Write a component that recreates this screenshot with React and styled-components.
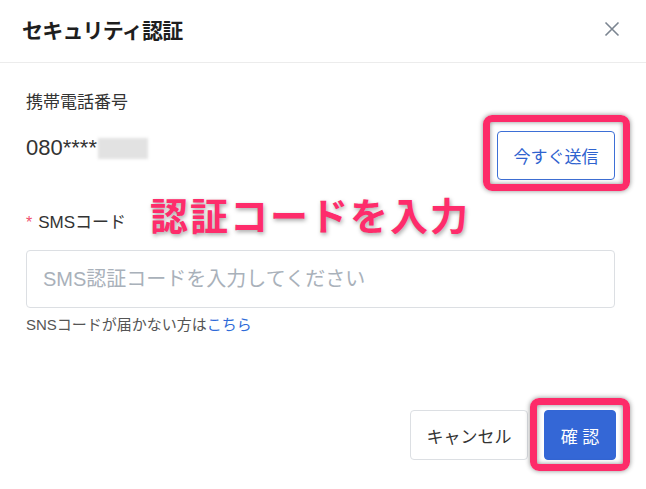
import styled, { createGlobalStyle } from "styled-components";

const GlobalStyle = createGlobalStyle`
  body {
    margin: 0;
    background: #fff;
    font-family: "Liberation Sans", "Noto Sans CJK JP", sans-serif;
    color: #222;
  }
`;

const Dialog = styled.div`
  width: 646px;
  height: 489px;
  background: #fff;
  display: flex;
  flex-direction: column;
`;

const Header = styled.div`
  height: 63px;
  border-bottom: 1px solid #ececec;
  display: flex;
  align-items: center;
  justify-content: space-between;
  padding: 0 26px 4px 22px;
  box-sizing: border-box;
`;

const Title = styled.h1`
  margin: 0;
  font-size: 21px;
  font-weight: 700;
  color: #1e1e1e;
  letter-spacing: -0.8px;
`;

const Close = styled.button`
  border: 0;
  background: none;
  padding: 0;
  width: 16px;
  height: 16px;
  display: flex;
  cursor: pointer;
`;

const Body = styled.div`
  padding: 28px 31px 0 26px;
  display: flex;
  flex-direction: column;
`;

const Label = styled.div`
  font-size: 17px;
  line-height: 24px;
  color: #333;
  display: flex;
  align-items: center;
  gap: 6px;
`;

const Required = styled.span`
  color: #f0506e;
  font-size: 16px;
`;

const PhoneRow = styled.div`
  margin-top: 16px;
  display: flex;
  align-items: flex-start;
  justify-content: space-between;
`;

const Phone = styled.div`
  font-size: 22px;
  line-height: 34px;
  color: #333;
  display: flex;
  align-items: center;
`;

const Masked = styled.span`
  display: inline-block;
  width: 50px;
  height: 21px;
  background: #e2e2e2;
  filter: blur(1.5px);
  margin-left: 1px;
`;

const Highlight = styled.div`
  position: relative;
  display: flex;

  &::after {
    content: "";
    position: absolute;
    inset: ${(p) => p.$inset};
    border: 7px solid #fd2b69;
    border-radius: 9px;
    box-shadow: 0 0 5px rgba(0, 0, 0, 0.45), inset 0 0 5px rgba(0, 0, 0, 0.45);
    pointer-events: none;
  }
`;

const Button = styled.button`
  height: ${(p) => p.$h || 50}px;
  width: ${(p) => p.$w}px;
  box-sizing: border-box;
  border-radius: 4px;
  font-family: inherit;
  font-size: 17px;
  cursor: pointer;
  border: 1px solid ${(p) => (p.$variant === "primary" ? "#3467d6" : p.$variant === "outline" ? "#3d6fd6" : "#dcdfe3")};
  background: ${(p) => (p.$variant === "primary" ? "#3467d6" : "#fff")};
  color: ${(p) => (p.$variant === "primary" ? "#fff" : p.$variant === "outline" ? "#2f63cf" : "#333")};
`;

const Field = styled.div`
  position: relative;
  margin-top: 31px;
`;

const Annotation = styled.div`
  position: absolute;
  left: 124px;
  top: -14px;
  font-size: 38px;
  line-height: 40px;
  font-weight: 700;
  letter-spacing: 2px;
  color: #fe2c6b;
  -webkit-text-stroke: 5px #fff;
  paint-order: stroke fill;
  text-shadow: 1px 2px 4px rgba(0, 0, 0, 0.35);
  white-space: nowrap;
  pointer-events: none;
`;

const Input = styled.input`
  margin-top: 15px;
  width: 100%;
  height: 58px;
  box-sizing: border-box;
  border: 1px solid #dcdfe3;
  border-radius: 4px;
  padding: 0 16px;
  font-family: "Liberation Sans", "Noto Sans CJK JP", sans-serif;
  font-size: 20px;
  outline: none;

  &::placeholder {
    color: #a9b1ba;
  }
`;

const Help = styled.div`
  margin-top: 7px;
  font-size: 15px;
  line-height: 20px;
  color: #555;

  a {
    color: #2f6bd8;
    text-decoration: none;
  }
`;

const Footer = styled.div`
  margin-top: auto;
  padding: 0 30px 29px 0;
  display: flex;
  justify-content: flex-end;
  gap: 16px;
`;

function App() {
  return (
    <>
      <GlobalStyle />
      <Dialog>
        <Header>
          <Title>セキュリティ認証</Title>
          <Close aria-label="close">
            <svg width="16" height="16" viewBox="0 0 16 16">
              <path d="M1.5 1.5L14.5 14.5M14.5 1.5L1.5 14.5" stroke="#7b8591" strokeWidth="1.6" fill="none" />
            </svg>
          </Close>
        </Header>
        <Body>
          <Label>携帯電話番号</Label>
          <PhoneRow>
            <Phone>
              080****
              <Masked />
            </Phone>
            <Highlight $inset="-16px -15px -11px -14px">
              <Button $variant="outline" $w={118} $h={49}>今すぐ送信</Button>
            </Highlight>
          </PhoneRow>
          <Field>
            <Label>
              <Required>*</Required>SMSコード
            </Label>
            <Annotation>認証コードを入力</Annotation>
            <Input placeholder="SMS認証コードを入力してください" />
            <Help>
              SNSコードが届かない方は<a href="#">こちら</a>
            </Help>
          </Field>
        </Body>
        <Footer>
          <Button $w={118}>キャンセル</Button>
          <Highlight $inset="-12px -14px -11px -14px">
            <Button $variant="primary" $w={72}>確 認</Button>
          </Highlight>
        </Footer>
      </Dialog>
    </>
  );
}

export default App;
